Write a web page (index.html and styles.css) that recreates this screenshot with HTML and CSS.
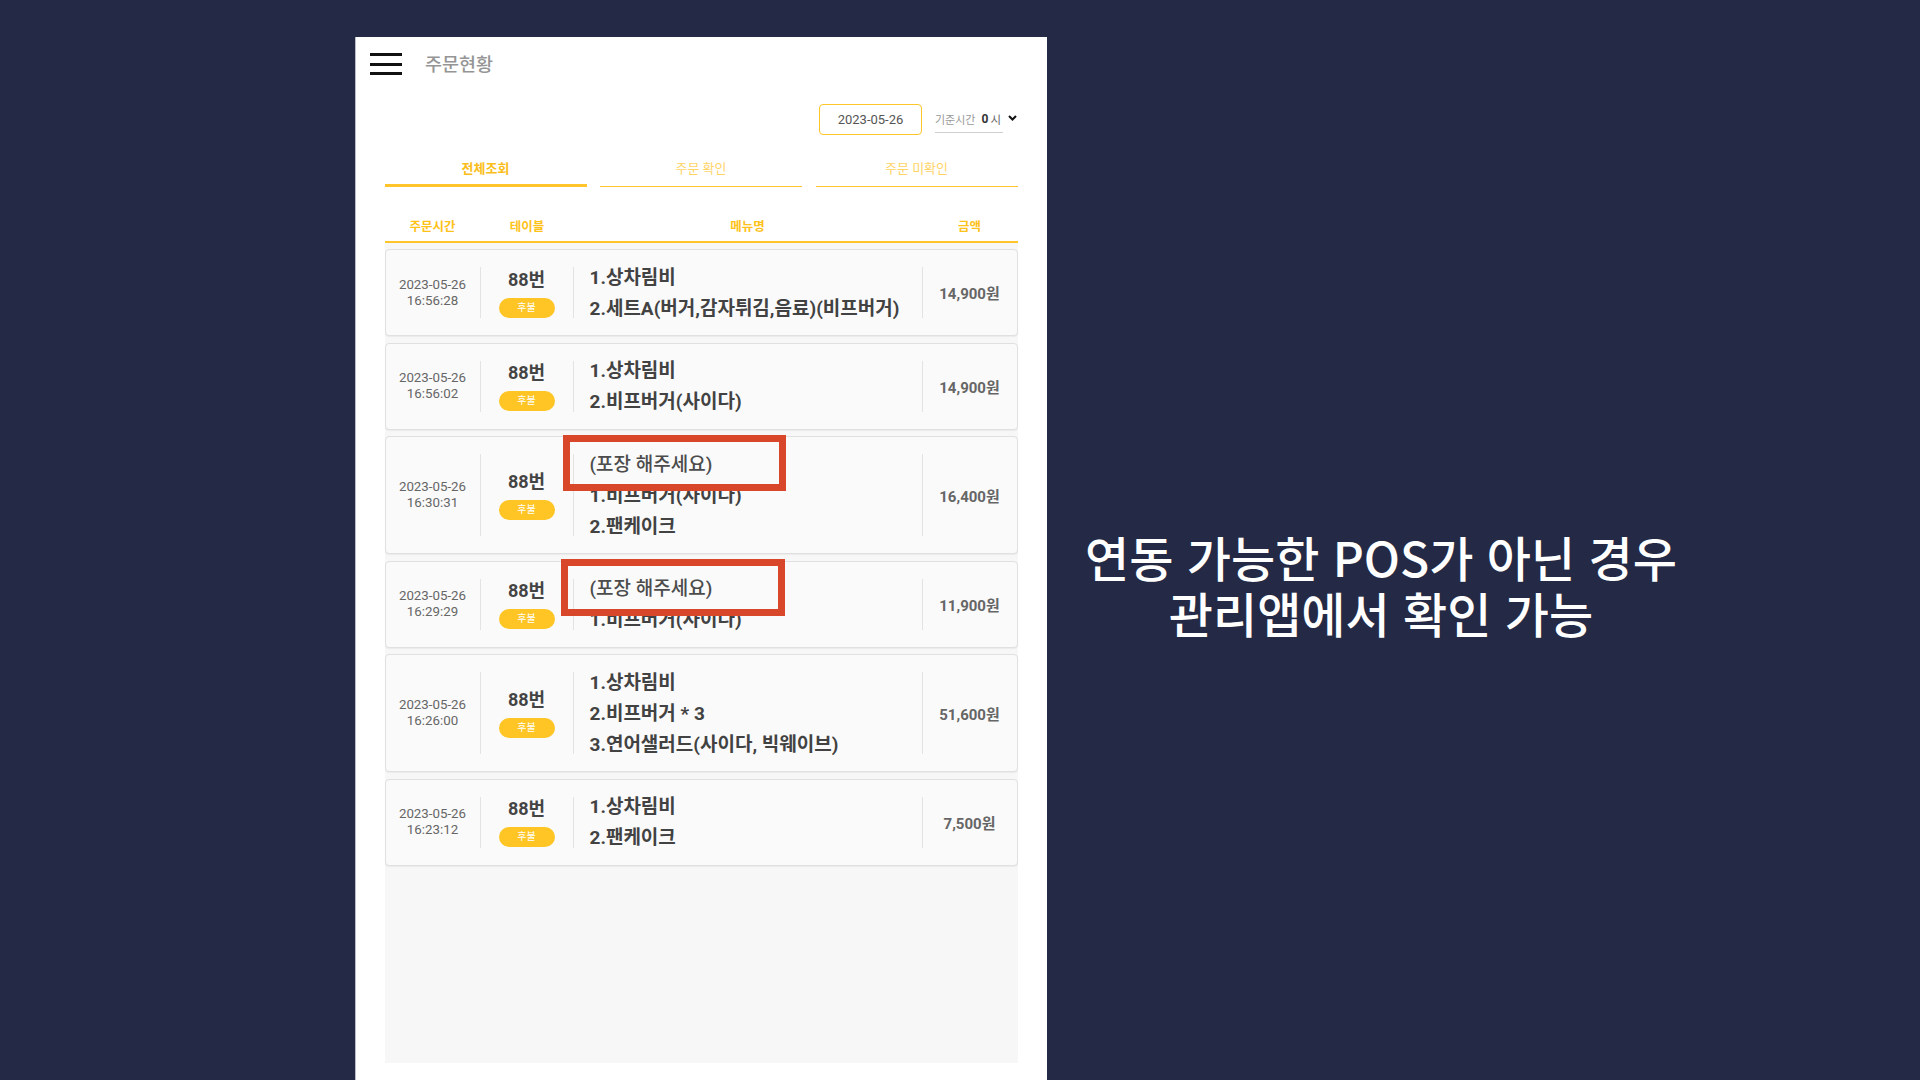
FILE: index.html
```html
<!DOCTYPE html>
<html lang="ko">
<head>
<meta charset="utf-8">
<title>주문현황</title>
<link rel="stylesheet" href="styles.css">
</head>
<body>
<div class="stage">
  <section class="phone">
    <header class="topbar">
      <span class="burger"><i></i><i></i><i></i></span>
      <h1 class="title">주문현황</h1>
    </header>
    <div class="filter">
      <div class="datebox">2023-05-26</div>
      <div class="basetime"><span class="bt-label">기준시간</span><b class="bt-hour">0</b><span class="bt-unit">시</span></div>
      <svg class="chev" width="9" height="6" viewBox="0 0 9 6"><polyline points="1,1 4.5,4.5 8,1" fill="none" stroke="#111" stroke-width="2"/></svg>
    </div>
    <nav class="tabs">
      <div class="tab active">전체조회</div>
      <div class="tab">주문 확인</div>
      <div class="tab">주문 미확인</div>
    </nav>
    <div class="colhead">
      <span>주문시간</span><span>테이블</span><span>메뉴명</span><span>금액</span>
    </div>
    <div class="list">
      <article class="card">
        <div class="c-date">2023-05-26<br>16:56:28</div>
        <div class="c-table"><span class="tno">88번</span><span class="badge">후불</span></div>
        <div class="c-menu"><p>1.상차림비</p><p>2.세트A(버거,감자튀김,음료)(비프버거)</p></div>
        <div class="c-price">14,900원</div>
      </article>
      <article class="card">
        <div class="c-date">2023-05-26<br>16:56:02</div>
        <div class="c-table"><span class="tno">88번</span><span class="badge">후불</span></div>
        <div class="c-menu"><p>1.상차림비</p><p>2.비프버거(사이다)</p></div>
        <div class="c-price">14,900원</div>
      </article>
      <article class="card">
        <div class="c-date">2023-05-26<br>16:30:31</div>
        <div class="c-table"><span class="tno">88번</span><span class="badge">후불</span></div>
        <div class="c-menu"><p class="note">(포장 해주세요)</p><p>1.비프버거(사이다)</p><p>2.팬케이크</p></div>
        <div class="c-price">16,400원</div>
        <span class="mark mark-a"></span>
      </article>
      <article class="card">
        <div class="c-date">2023-05-26<br>16:29:29</div>
        <div class="c-table"><span class="tno">88번</span><span class="badge">후불</span></div>
        <div class="c-menu"><p class="note">(포장 해주세요)</p><p>1.비프버거(사이다)</p></div>
        <div class="c-price">11,900원</div>
        <span class="mark mark-b"></span>
      </article>
      <article class="card">
        <div class="c-date">2023-05-26<br>16:26:00</div>
        <div class="c-table"><span class="tno">88번</span><span class="badge">후불</span></div>
        <div class="c-menu"><p>1.상차림비</p><p>2.비프버거 * 3</p><p>3.연어샐러드(사이다, 빅웨이브)</p></div>
        <div class="c-price">51,600원</div>
      </article>
      <article class="card">
        <div class="c-date">2023-05-26<br>16:23:12</div>
        <div class="c-table"><span class="tno">88번</span><span class="badge">후불</span></div>
        <div class="c-menu"><p>1.상차림비</p><p>2.팬케이크</p></div>
        <div class="c-price">7,500원</div>
      </article>
    </div>
  </section>
  <div class="caption">
    <p>연동 가능한 POS가 아닌 경우<br>관리앱에서 확인 가능</p>
  </div>
</div>
</body>
</html>
```
FILE: styles.css
```css
* { box-sizing: border-box; }
html, body { margin: 0; padding: 0; }
body {
  background: #242a45;
  font-family: Roboto, "Noto Sans CJK KR", "Noto Sans", sans-serif;
  overflow: hidden;
}
.stage {
  display: flex;
  height: 1080px;
  width: 1920px;
}
.phone {
  margin-left: 355px;
  margin-top: 37px;
  width: 692px;
  height: 1043px;
  background: #ffffff;
  border-left: 1px solid #b9bcc6;
  padding: 0 29.5px 17px 28.5px;
  display: flex;
  flex-direction: column;
}
.topbar {
  height: 54px;
  margin: 0 -14.5px;
  display: flex;
  align-items: center;
}
.burger {
  width: 32px;
  display: flex;
  flex-direction: column;
  gap: 6.5px;
}
.burger i {
  display: block;
  height: 3px;
  background: #111;
}
.title {
  margin: 1px 0 0 23px;
  font-size: 18.5px;
  font-weight: 500;
  color: #959595;
  line-height: 24px;
}
.filter {
  margin-top: 13px;
  height: 31px;
  display: flex;
  justify-content: flex-end;
  align-items: center;
}
.datebox {
  width: 103px;
  height: 31px;
  border: 1px solid #ffc62a;
  border-radius: 4px;
  display: flex;
  align-items: center;
  justify-content: center;
  font-size: 13px;
  color: #555;
}
.basetime {
  margin-left: 13px;
  width: 68px;
  height: 27px;
  border-bottom: 1px solid #cfcfcf;
  display: flex;
  align-items: center;
  padding-bottom: 1px;
}
.bt-label { font-size: 11px; color: #999; }
.bt-hour { font-size: 12px; color: #333; margin-left: 6px; font-weight: 700; }
.bt-unit { font-size: 11.5px; color: #666; margin-left: 2px; }
.chev { margin-left: 5px; margin-right: 0.5px; margin-top: -4px; }
.tabs {
  margin-top: 15px;
  display: grid;
  grid-template-columns: repeat(3, 1fr);
  gap: 13.5px;
  align-items: end;
}
.tab {
  text-align: center;
  font-size: 13px;
  line-height: 18px;
  color: #ffd466;
  padding: 10px 0 8px;
  border-bottom: 1px solid #ffc52a;
}
.tab.active {
  color: #fbbd1a;
  font-weight: 700;
  padding-bottom: 6px;
  border-bottom: 3px solid #ffc52a;
}
.colhead {
  display: grid;
  grid-template-columns: 96px 93px 1fr 96px;
  padding: 31px 0 5px;
  border-bottom: 2px solid #ffc52a;
  font-size: 12.5px;
  line-height: 18px;
  font-weight: 700;
  color: #ffc21a;
  text-align: center;
}
.list {
  flex: 1;
  background: #f7f7f7;
  padding-top: 6px;
  display: flex;
  flex-direction: column;
  gap: 6.5px;
}
.card {
  position: relative;
  display: grid;
  grid-template-columns: 95px 93px 1fr 95px;
  background: #fafafa;
  border: 1px solid #e0e0e0;
  border-radius: 4px;
  box-shadow: 0 1px 1px rgba(0,0,0,0.05);
  padding: 11.5px 0;
}
.c-date {
  margin: 5.5px 0;
  border-right: 1px solid #e3e3e3;
  display: flex;
  align-items: center;
  justify-content: center;
  text-align: center;
  font-size: 13.3px;
  line-height: 16px;
  color: #666;
}
.c-table {
  margin: 5.5px 0;
  border-right: 1px solid #e3e3e3;
  display: flex;
  flex-direction: column;
  align-items: center;
  justify-content: center;
}
.tno {
  font-size: 18px;
  line-height: 24px;
  font-weight: 700;
  color: #444;
}
.badge {
  margin-top: 6px;
  width: 56px;
  height: 20px;
  border-radius: 10px;
  background: #ffc524;
  color: #fff;
  font-size: 10px;
  line-height: 20px;
  text-align: center;
}
.c-menu {
  padding-left: 16px;
  display: flex;
  flex-direction: column;
  justify-content: center;
}
.c-menu p {
  margin: 0;
  font-size: 19px;
  line-height: 31px;
  font-weight: 700;
  color: #424242;
  white-space: nowrap;
}
.c-menu p.note {
  font-weight: 500;
  color: #4c4c4c;
}
.c-price {
  margin: 5.5px 0;
  border-left: 1px solid #e3e3e3;
  display: flex;
  align-items: center;
  justify-content: center;
  font-size: 15px;
  font-weight: 700;
  color: #666;
}
.mark {
  position: absolute;
  border: 7px solid #d9472b;
}
.mark-a { left: 177.5px; top: -2.5px; width: 223px; height: 56.5px; }
.mark-b { left: 175px; top: -2.5px; width: 224.5px; height: 57px; }
.caption {
  width: 668px;
  padding-top: 528px;
  text-align: center;
}
.caption p {
  margin: 0;
  font-family: "Noto Sans CJK KR", "Noto Sans", sans-serif;
  font-size: 48px;
  line-height: 56px;
  font-weight: 500;
  color: #ffffff;
}
```
